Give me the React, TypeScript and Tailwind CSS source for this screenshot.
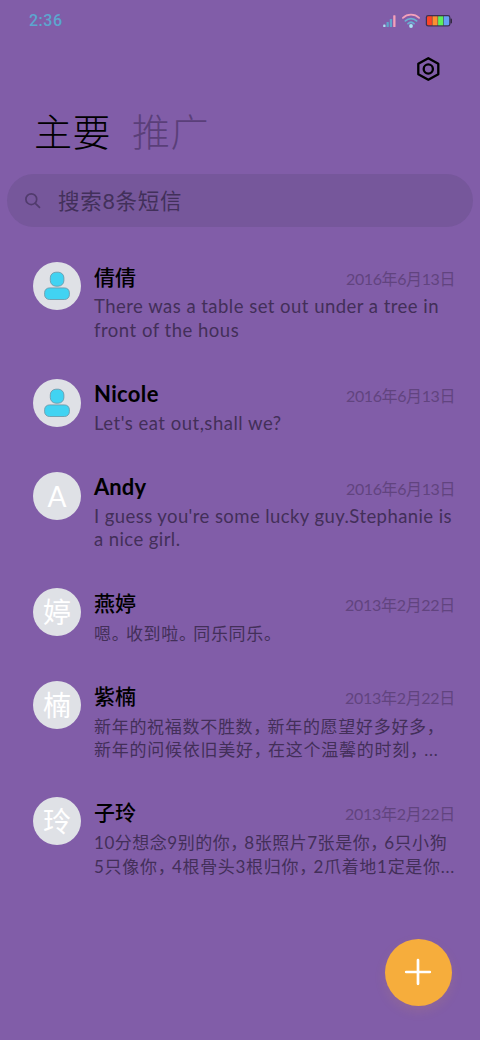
import { Fragment } from "react";
import clsx from "clsx";

type Line = { text: string; className: string };

type Message = {
  name: string;
  nameClass: string;
  date: string;
  dateClass: string;
  initial?: string;
  lines: Line[];
};

const messages: Message[] = [
  {
    name: "倩倩",
    nameClass: "text-[21px] font-medium",
    date: "2016年6月13日",
    dateClass: "tracking-[-0.4px]",
    lines: [
      { text: "There was a table set out under a tree in", className: "text-[18.5px] tracking-[0.47px]" },
      { text: "front of the hous", className: "text-[18.5px] tracking-[0.5px]" },
    ],
  },
  {
    name: "Nicole",
    nameClass: "text-[22px] font-bold tracking-[0.35px]",
    date: "2016年6月13日",
    dateClass: "tracking-[-0.4px]",
    lines: [{ text: "Let's eat out,shall we?", className: "text-[18.5px] tracking-[0.5px]" }],
  },
  {
    name: "Andy",
    nameClass: "text-[22px] font-bold tracking-[0.1px]",
    date: "2016年6月13日",
    dateClass: "tracking-[-0.4px]",
    initial: "A",
    lines: [
      { text: "I guess you're some lucky guy.Stephanie is", className: "text-[18.5px] tracking-[0.42px]" },
      { text: "a nice girl.", className: "text-[18.5px] tracking-[0.42px]" },
    ],
  },
  {
    name: "燕婷",
    nameClass: "text-[21px] font-medium",
    date: "2013年2月22日",
    dateClass: "tracking-[-0.3px]",
    initial: "婷",
    lines: [{ text: "嗯。收到啦。同乐同乐。", className: "pt-px text-[17px] tracking-[0.7px]" }],
  },
  {
    name: "紫楠",
    nameClass: "text-[21px] font-medium",
    date: "2013年2月22日",
    dateClass: "tracking-[-0.3px]",
    initial: "楠",
    lines: [
      { text: "新年的祝福数不胜数，新年的愿望好多好多，", className: "pt-px text-[17px] tracking-[0.7px]" },
      { text: "新年的问候依旧美好，在这个温馨的时刻，...", className: "pt-px text-[17px] tracking-[0.75px]" },
    ],
  },
  {
    name: "子玲",
    nameClass: "text-[21px] font-medium",
    date: "2013年2月22日",
    dateClass: "tracking-[-0.3px]",
    initial: "玲",
    lines: [
      { text: "10分想念9别的你，8张照片7张是你，6只小狗", className: "pt-px text-[17px] tracking-[0.52px]" },
      { text: "5只像你，4根骨头3根归你，2爪着地1定是你...", className: "pt-px text-[17px] tracking-[0.7px]" },
    ],
  },
];

// full-width punctuation is set in a narrower box than the characters
function Preview({ text, className }: Line) {
  return (
    <div className={clsx("h-[23.5px] whitespace-nowrap leading-[23.5px] text-[#432f59]", className)}>
      {text.split(/([，。])/).map((part, i) => (
        <Fragment key={i}>
          {part === "，" || part === "。" ? (
            <span className="mr-[5px] [font-feature-settings:'halt']">{part}</span>
          ) : (
            part
          )}
        </Fragment>
      ))}
    </div>
  );
}

function Avatar({ initial }: { initial?: string }) {
  return (
    <div className="flex size-12 shrink-0 items-center justify-center rounded-full bg-[#dfe1e6] text-[28px] leading-none text-white">
      {initial ?? (
        <svg width="28" height="30" viewBox="0 0 28 30" fill="#41d3f2" stroke="#6b93a3" strokeWidth="0.8">
          <rect x="7.3" y="1.2" width="13.6" height="14" rx="5.6" />
          <rect x="1.6" y="16.9" width="24.8" height="11.6" rx="4.8" />
        </svg>
      )}
    </div>
  );
}

function MessageRow({ message }: { message: Message }) {
  return (
    <li className="flex gap-[13px] pt-[17px] pr-[25px] pb-[19.4px] pl-[33px]">
      <Avatar initial={message.initial} />
      <div className="min-w-0 flex-1">
        <div className="flex h-[33px] items-start justify-between">
          <span className={clsx("leading-[30px] text-black", message.nameClass)}>{message.name}</span>
          <span className={clsx("text-base leading-[33px] text-[#61447f]", message.dateClass)}>{message.date}</span>
        </div>
        {message.lines.map((line) => (
          <Preview key={line.text} {...line} />
        ))}
      </div>
    </li>
  );
}

function StatusBar() {
  return (
    <div className="flex h-10 items-center justify-between pt-px pr-[27px] pl-[29px]">
      <span className="pt-px font-[Roboto] text-base font-medium tracking-[0.5px] text-[#5ca6cf]">2:36</span>
      <div className="flex items-center">
        <svg width="14" height="14" viewBox="0 0 14 14">
          <rect x="1.2" y="10.5" width="2.3" height="2.5" rx="0.6" fill="#a8dff0" />
          <rect x="4.5" y="8" width="2.3" height="5" rx="0.6" fill="#5fa5cc" />
          <rect x="7.8" y="5" width="2.3" height="8" rx="0.6" fill="#5fa5cc" />
          <rect x="11.2" y="1.2" width="2.3" height="11.8" rx="0.6" fill="#f3a0ba" />
        </svg>
        <svg width="20" height="16" viewBox="0 0 20 16" fill="none" strokeWidth="1.8" strokeLinecap="round" className="ml-[5px]">
          <path d="M1.9 4.8a11.8 11.8 0 0 1 16.2 0" stroke="#f3a0ba" />
          <path d="M4.4 7.9a8 8 0 0 1 11.2 0" stroke="#69b0d2" />
          <path d="M7 10.6a4.6 4.6 0 0 1 6 0" stroke="#69b0d2" />
          <circle cx="10" cy="13" r="1.9" fill="#a6e4f2" />
        </svg>
        <svg width="28" height="14" viewBox="0 0 28 14" className="ml-1">
          <path d="M25.4 4.5h.6a1 1 0 0 1 1 1v3a1 1 0 0 1-1 1h-.6z" fill="#322840" />
          <rect x="0.8" y="1" width="24.6" height="11.6" rx="2.4" fill="#3e3153" />
          <path d="M3.3 2.3h3.6v9H3.3A1.3 1.3 0 0 1 2 10V3.6a1.3 1.3 0 0 1 1.3-1.3z" fill="#fb4527" />
          <rect x="7.4" y="2.3" width="5.2" height="9" fill="#fd9030" />
          <rect x="13.1" y="2.3" width="5.2" height="9" fill="#5ef05a" />
          <path d="M18.8 2.3h4.1a1.3 1.3 0 0 1 1.3 1.3V10a1.3 1.3 0 0 1-1.3 1.3h-4.1z" fill="#659ff5" />
        </svg>
      </div>
    </div>
  );
}

export default function App() {
  return (
    <div className="relative h-[1040px] w-[480px] overflow-hidden bg-[#815da8] font-['Lato','Noto_Sans_CJK_SC',sans-serif]">
      <StatusBar />

      <div className="flex h-[58px] items-center justify-end pr-[38px]">
        <svg width="28" height="28" viewBox="0 0 28 28" fill="none" stroke="#000" strokeWidth="2.3" strokeLinejoin="round">
          <path d="M14.3 3.2 24.3 8.8v10.4l-10 5.6-10-5.6V8.8z" />
          <circle cx="14.3" cy="14" r="4.6" />
        </svg>
      </div>

      <div className="flex h-[76px] items-center gap-[21px] pb-[11px] pl-[34px] text-[38px] leading-none font-light tracking-[0.5px]">
        <span className="text-black">主要</span>
        <span className="text-[#5a3f79]">推广</span>
      </div>

      <div className="mx-[7px] flex h-[53px] items-center rounded-full bg-[#76579b] pl-[17px]">
        <svg width="17" height="17" viewBox="0 0 17 17" fill="none" stroke="#513b6d" strokeWidth="1.7" strokeLinecap="round">
          <circle cx="7.3" cy="7.2" r="5.4" />
          <path d="m11.3 11.3 4.2 4" />
        </svg>
        <span className="ml-[17px] pt-0.5 text-[21.5px] tracking-[0.7px] text-[#42305a]">搜索8条短信</span>
      </div>

      <ul className="pt-[18.3px]">
        {messages.map((message) => (
          <MessageRow key={message.name} message={message} />
        ))}
      </ul>

      <button className="absolute top-[938.5px] left-[384.5px] flex size-[67px] items-center justify-center rounded-full bg-[#f6ad3c] shadow-[0_5px_12px_rgba(246,173,60,0.12)]">
        <svg width="28" height="28" viewBox="0 0 28 28" stroke="#fff" strokeWidth="2.7" strokeLinecap="round">
          <path d="M14 2.2v23.6M2.2 14h23.6" />
        </svg>
      </button>
    </div>
  );
}
